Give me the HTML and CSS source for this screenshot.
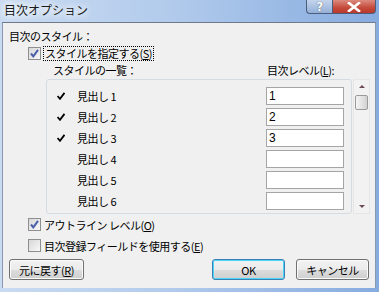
FILE: index.html
```html
<!DOCTYPE html>
<html lang="ja">
<head>
  <meta charset="UTF-8">
  <title>目次オプション</title>
  <link rel="stylesheet" href="styles.css">
</head>
<body>
  <div class="window">
    <div class="titlebar">
      <span class="title">目次オプション</span>
      <div class="caption-buttons">
        <span class="cap-btn help">?</span>
        <span class="cap-btn close">
          <svg width="14" height="10" viewBox="0 0 14 10"><path d="M2 1 L12 9 M12 1 L2 9" stroke="#fff" stroke-width="2.6" stroke-linecap="square"/></svg>
        </span>
      </div>
    </div>

    <div class="client">
      <div class="group-label">目次のスタイル：</div>

      <div class="check-row indent">
        <span class="checkbox checked"></span>
        <span class="focus">スタイルを指定する(<u>S</u>)</span>
      </div>

      <div class="list-header">
        <span class="list-title">スタイルの一覧：</span>
        <span class="level-title">目次レベル(<u>L</u>):</span>
      </div>

      <div class="list-wrap">
        <div class="listbox">
          <div class="list-row"><span class="tick"><svg width="8" height="8" viewBox="0 0 8 8"><path d="M0.5 4 L3 6.8 L7.5 0.8" fill="none" stroke="#000" stroke-width="1.8"/></svg></span><span class="name">見出し 1</span><span class="level">1</span></div>
          <div class="list-row"><span class="tick"><svg width="8" height="8" viewBox="0 0 8 8"><path d="M0.5 4 L3 6.8 L7.5 0.8" fill="none" stroke="#000" stroke-width="1.8"/></svg></span><span class="name">見出し 2</span><span class="level">2</span></div>
          <div class="list-row"><span class="tick"><svg width="8" height="8" viewBox="0 0 8 8"><path d="M0.5 4 L3 6.8 L7.5 0.8" fill="none" stroke="#000" stroke-width="1.8"/></svg></span><span class="name">見出し 3</span><span class="level">3</span></div>
          <div class="list-row"><span class="tick"></span><span class="name">見出し 4</span><span class="level"></span></div>
          <div class="list-row"><span class="tick"></span><span class="name">見出し 5</span><span class="level"></span></div>
          <div class="list-row"><span class="tick"></span><span class="name">見出し 6</span><span class="level"></span></div>
        </div>
        <div class="scrollbar">
          <span class="arrow up"></span>
          <span class="thumb"></span>
          <span class="track"></span>
          <span class="arrow down"></span>
        </div>
      </div>

      <div class="check-row option">
        <span class="checkbox checked"></span>
        <span>アウトライン レベル(<u>O</u>)</span>
      </div>
      <div class="check-row option">
        <span class="checkbox"></span>
        <span>目次登録フィールドを使用する(<u>E</u>)</span>
      </div>

      <div class="button-row">
        <button class="btn reset">元に戻す(<u>R</u>)</button>
        <span class="spacer"></span>
        <button class="btn default">OK</button>
        <button class="btn cancel">キャンセル</button>
      </div>
    </div>
  </div>
</body>
</html>
```

FILE: styles.css
```css
body {
  margin: 0;
  width: 379px;
  height: 292px;
  overflow: hidden;
  font-family: "Noto Sans CJK JP", "Liberation Sans", sans-serif;
  font-size: 11px;
  letter-spacing: -0.5px;
  color: #000;
}

.window {
  height: 292px;
  box-sizing: border-box;
  background: linear-gradient(90deg, #c9dbf1 0%, #b2cbec 45%, #86abdf 100%);
  padding: 0 3px 4px 2px;
  display: flex;
  flex-direction: column;
}

.titlebar {
  height: 22px;
  display: flex;
  justify-content: space-between;
  align-items: flex-start;
}

.title {
  font-size: 12px;
  line-height: 20px;
  padding-left: 2px;
  letter-spacing: 0;
  color: #1a1a1a;
  text-shadow: 0 0 6px #fff, 0 0 8px #fff, 0 0 10px #fff;
}

.caption-buttons {
  display: flex;
}

.cap-btn {
  height: 14px;
  box-sizing: border-box;
  border: 1px solid #4a5d7c;
  border-top: none;
  display: flex;
  align-items: center;
  justify-content: center;
}

.help {
  width: 26px;
  border-radius: 0 0 0 4px;
  border-right: none;
  background: linear-gradient(#c4d4ec, #94b0d8);
  color: #fff;
  font-family: "DejaVu Sans", sans-serif;
  font-weight: bold;
  font-size: 12px;
  line-height: 12px;
  text-shadow: 0 0 1px #334;
}

.close {
  width: 44px;
  border-radius: 0 0 4px 0;
  background: linear-gradient(#dc8a7e, #c44a3a 60%, #b93a2c);
}

.client {
  flex: 1;
  background: #f0f0f0;
  border-top: 1px solid #6e7a8a;
  border-left: 1px solid #8798b0;
  border-right: 1px solid #8798b0;
  padding-left: 6px;
  display: flex;
  flex-direction: column;
}

.group-label {
  height: 17px;
  line-height: 17px;
  margin-top: 5px;
}

.check-row {
  display: flex;
  align-items: center;
  height: 16px;
  padding-left: 19px;
}

.checkbox {
  width: 13px;
  height: 13px;
  box-sizing: border-box;
  border: 1px solid #8e8f8f;
  background: linear-gradient(135deg, #d8d8d8, #f8f8f8);
  margin-right: 3px;
  flex: none;
}

.checkbox.checked {
  background: url("data:image/svg+xml;utf8,<svg xmlns='http://www.w3.org/2000/svg' width='11' height='11' viewBox='0 0 11 11'><path d='M2 5.5 L4.3 8.3 L9 1.8' fill='none' stroke='%234a5fa8' stroke-width='2'/></svg>") center no-repeat,
    linear-gradient(135deg, #d8d8d8, #f8f8f8);
}

.focus {
  outline: 1px dotted #000;
  line-height: 13px;
  padding: 0 1px;
}

.list-header {
  display: flex;
  height: 17px;
  line-height: 17px;
  margin-top: 1px;
}

.list-title {
  padding-left: 44px;
  width: 214px;
}

.list-wrap {
  display: flex;
  margin-left: 37px;
  height: 135px;
}

.listbox {
  width: 306px;
  box-sizing: border-box;
  border: 1px solid #d5dbe3;
  border-radius: 3px;
  padding-top: 5px;
}

.list-row {
  display: flex;
  align-items: center;
  height: 21px;
}

.tick {
  width: 30px;
  padding-left: 10px;
  box-sizing: border-box;
  display: flex;
  align-items: center;
}

.name {
  width: 189px;
}

.level {
  width: 78px;
  height: 18px;
  box-sizing: border-box;
  border: 1px solid #a5a5a5;
  background: #fff;
  padding-left: 2px;
  line-height: 16px;
  font-family: "Liberation Sans", sans-serif;
  font-size: 12px;
  letter-spacing: 0;
}

.scrollbar {
  width: 17px;
  margin-left: 1px;
  box-sizing: border-box;
  border: 1px solid #e6e6e6;
  background: #f2f2f2;
  display: flex;
  flex-direction: column;
  align-items: center;
}

.arrow {
  width: 0;
  height: 0;
  border-left: 3px solid transparent;
  border-right: 3px solid transparent;
}

.arrow.up {
  border-bottom: 3px solid #6d4b52;
  margin-top: 5px;
}

.arrow.down {
  border-top: 3px solid #6d4b52;
  margin-bottom: 5px;
}

.thumb {
  width: 13px;
  height: 15px;
  box-sizing: border-box;
  border: 1px solid #9a9a9a;
  border-radius: 2px;
  background: linear-gradient(90deg, #f4f4f4, #e4e4e4 50%, #d2d2d2);
  margin-top: 7px;
}

.track {
  flex: 1;
}

.option {
  height: 21px;
}

.button-row {
  display: flex;
  margin-top: 3px;
  padding-right: 6px;
  height: 23px;
}

.spacer {
  flex: 1;
}

.btn {
  font-family: "Noto Sans CJK JP", sans-serif;
  font-size: 11px;
  letter-spacing: -0.5px;
  color: #000;
  height: 21px;
  padding: 0;
  border: 1px solid #707070;
  border-radius: 3px;
  background: linear-gradient(#f2f2f2 0%, #ebebeb 50%, #dddddd 51%, #cfcfcf 100%);
  box-shadow: inset 0 0 0 1px #fbfbfb;
}

.reset {
  width: 75px;
}

.default {
  width: 73px;
  border-color: #3c7fb1;
  box-shadow: inset 0 0 0 1px #48d6fb;
  margin-right: 11px;
}

.cancel {
  width: 73px;
}
```
